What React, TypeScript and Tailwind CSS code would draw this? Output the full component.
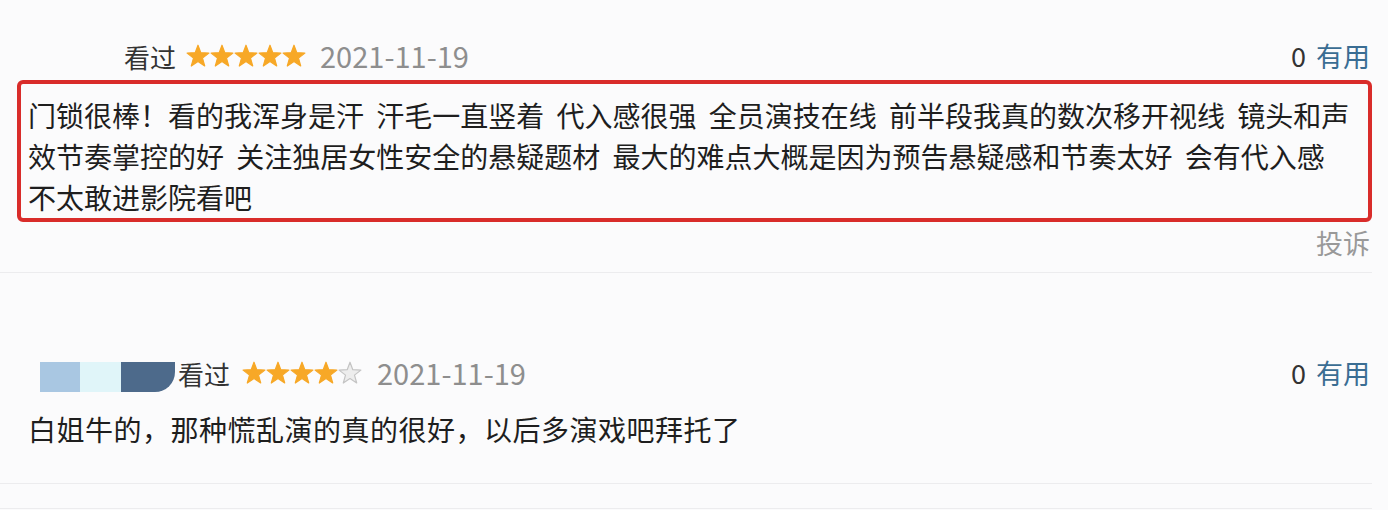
import { Fragment } from 'react'

const FONT = "font-['Noto_Sans_CJK_SC','Noto_Sans',sans-serif]"

function Star({ filled }: { filled: boolean }) {
  return (
    <svg viewBox="0 0 24 24" className="w-6 h-6">
      <path
        d="M12 1.2L14.8 8.7 22.9 9.1 16.5 14.1 18.7 22 12 17.5 5.3 22 7.5 14.1 1.1 9.1 9.2 8.7Z"
        fill={filled ? '#f7a827' : '#ededed'}
        stroke={filled ? '#f7a827' : '#c4c4c4'}
        strokeWidth="1.2"
        strokeLinejoin="round"
      />
    </svg>
  )
}

function Rating({ value }: { value: number }) {
  return (
    <div className="flex items-center">
      {[1, 2, 3, 4, 5].map((i) => (
        <Star key={i} filled={i <= value} />
      ))}
    </div>
  )
}

function Votes({ count }: { count: number }) {
  return (
    <div className="ml-auto flex items-center gap-[10px] text-[27px] pr-[2px]">
      <span className="text-[#333]">{count}</span>
      <span className="text-[#3a6d93]">有用</span>
    </div>
  )
}

const firstLines = [
  '门锁很棒！看的我浑身是汗 汗毛一直竖着 代入感很强 全员演技在线 前半段我真的数次移开视线 镜头和声',
  '效节奏掌控的好 关注独居女性安全的悬疑题材 最大的难点大概是因为预告悬疑感和节奏太好 会有代入感',
  '不太敢进影院看吧',
]

export default function App() {
  return (
    <div className={`min-h-screen bg-[#fbfbfc] ${FONT} overflow-hidden`}>
      <div className="pr-4">
        {/* first review */}
        <div className="flex items-center h-9 mt-[38px] pl-[124px]">
          <span className="text-[26px] text-[#333]">看过</span>
          <div className="ml-[10px]">
            <Rating value={5} />
          </div>
          <span className="ml-[14px] text-[29px] text-[#8e8e8e]">2021-11-19</span>
          <Votes count={0} />
        </div>

        <div className="mt-[6px] ml-[17px] border-4 border-[#d92c2a] rounded-md pl-[7px] pt-[11px] text-[28px] leading-[41px] text-[#1e1e1e] [word-spacing:6px]">
          {firstLines.map((line, i) => (
            <Fragment key={i}>
              {line}
              {i < firstLines.length - 1 && <br />}
            </Fragment>
          ))}
        </div>

        <div className="flex justify-end h-10 items-center mt-[1px] pr-[2px] mb-[9px] text-[27px] text-[#999]">
          投诉
        </div>
        <div className="border-t border-[#ececee]" />

        {/* second review */}
        <div className="flex items-center h-9 mt-[82px]">
          <div className="flex h-[30px] ml-[40px] mt-2">
            <div className="w-[40px] bg-[#a9c7e2]" />
            <div className="w-[41px] bg-[#e0f5f9]" />
            <div className="w-[54px] bg-[#4d6a8b] rounded-br-[20px]" />
          </div>
          <span className="ml-[3px] text-[26px] text-[#333]">看过</span>
          <div className="ml-[12px]">
            <Rating value={4} />
          </div>
          <span className="ml-[15px] text-[29px] text-[#8e8e8e]">2021-11-19</span>
          <Votes count={0} />
        </div>

        <div className="mt-[18px] pl-[28px] text-[28px] leading-10 tracking-[0.5px] text-[#1e1e1e]">
          白姐牛的，那种慌乱演的真的很好，以后多演戏吧拜托了
        </div>

        <div className="mt-[34px] border-t border-[#ececee]" />
        <div className="mt-6 border-t border-[#ececee]" />
      </div>
    </div>
  )
}
